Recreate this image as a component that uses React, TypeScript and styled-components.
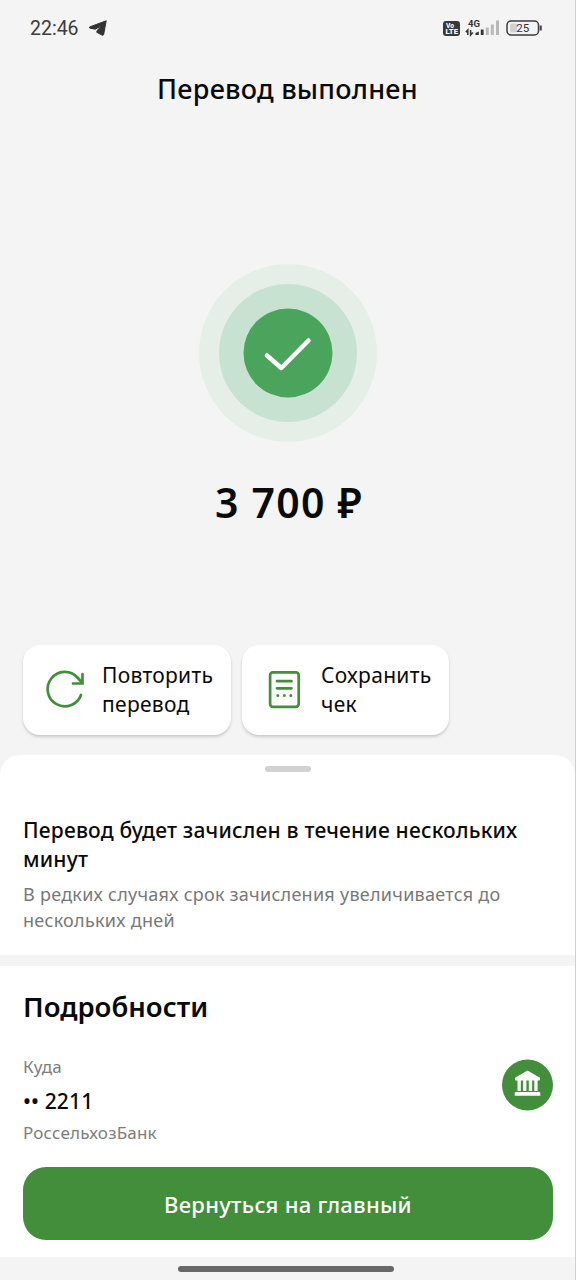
import React from "react";
import styled, { createGlobalStyle } from "styled-components";

const GlobalStyle = createGlobalStyle`
  * { box-sizing: border-box; }
  body { margin: 0; background: #f4f4f4; }
`;

const Screen = styled.div`
  width: 576px;
  height: 1280px;
  display: flex;
  flex-direction: column;
  overflow: hidden;
  background: #f4f4f4;
  border-right: 1px solid #cfcfcf;
  font-family: "Noto Sans", "Open Sans", sans-serif;
  color: #0a0a0a;
`;

const StatusBar = styled.header`
  height: 56px;
  flex: none;
  display: flex;
  align-items: center;
  justify-content: space-between;
  padding: 0 32px 0 30px;
  color: #3c3c3c;
`;

const StatusGroup = styled.div<{ $gap: number }>`
  display: flex;
  align-items: center;
  gap: ${(p) => p.$gap}px;
`;

const Clock = styled.span`
  padding-top: 2px;
  font: 400 19.5px/24px Roboto, sans-serif;
`;

const Line = styled.p<{
  $size: number;
  $height: number;
  $weight?: number;
  $spacing?: number;
  $color?: string;
  $top?: number;
}>`
  margin: ${(p) => p.$top ?? 0}px 0 0;
  font-size: ${(p) => p.$size}px;
  line-height: ${(p) => p.$height}px;
  font-weight: ${(p) => p.$weight ?? 400};
  letter-spacing: ${(p) => p.$spacing ?? 0}px;
  color: ${(p) => p.$color ?? "inherit"};
  white-space: nowrap;
`;

const Amount = styled(Line)`
  padding-left: 3px;
`;

const Hero = styled.main`
  height: 589px;
  flex: none;
  display: flex;
  flex-direction: column;
  align-items: center;
`;

const Disc = styled.svg`
  display: block;
  margin-top: 156px;
  flex: none;
`;

const Actions = styled.div`
  height: 110px;
  flex: none;
  display: flex;
  gap: 11px;
  padding: 0 23px 20px;
`;

const ActionCard = styled.button<{ $width: number }>`
  width: ${(p) => p.$width}px;
  height: 90px;
  display: flex;
  align-items: center;
  gap: 16px;
  padding: 0 0 0 21px;
  border: 0;
  border-radius: 17px;
  background: #fff;
  box-shadow: 0 2px 3px rgba(0, 0, 0, 0.17);
  color: inherit;
  font-family: inherit;
  text-align: left;
`;

const Sheet = styled.section`
  height: 200px;
  flex: none;
  padding: 11px 23px 0;
  background: #fff;
  border-radius: 20px 20px 0 0;
`;

const Handle = styled.div`
  width: 46px;
  height: 6px;
  margin: 0 auto 44px;
  border-radius: 3px;
  background: #d2d2d2;
`;

const Details = styled.section`
  height: 291px;
  flex: none;
  margin-top: 11px;
  padding: 22px 22px 0 23px;
  background: #fff;
`;

const Recipient = styled.div`
  height: 114px;
  margin-top: 27px;
  display: flex;
  justify-content: space-between;
`;

const BankBadge = styled.svg`
  display: block;
  margin-top: 6px;
`;

const HomeButton = styled.button`
  width: 100%;
  height: 73px;
  display: flex;
  align-items: center;
  justify-content: center;
  padding: 0;
  border: 0;
  border-radius: 23px;
  background: #428e3a;
  color: #fff;
  font-family: inherit;
`;

const NavBar = styled.footer`
  flex: 1;
  padding: 9px 0 0 178px;
`;

const NavPill = styled.div`
  width: 216px;
  height: 6px;
  border-radius: 3px;
  background: #686868;
`;

const Plane = () => (
  <svg width="18" height="16" viewBox="0 0 18 16">
    <path d="M17.200.8 1 6.800c-.9.4-.9 1.200 0 1.400l5.300 1L12.500 5.600 8.500 10.200l-.9 2 5.400 2.900c.9.4 1.500.2 1.700-.8Z" fill="#333" stroke="#333" strokeWidth="1" strokeLinejoin="round" />
  </svg>
);

const VoLte = () => (
  <svg width="17" height="15" viewBox="0 0 17 15">
    <rect width="17" height="15" rx="3" fill="#393939" />
    <g fill="#fff" fontFamily="Roboto, sans-serif" fontWeight="800" fontSize="7">
      <text x="3" y="7" textLength="8" lengthAdjust="spacingAndGlyphs">Vo</text>
      <text x="2.500" y="13.300" textLength="12.500" lengthAdjust="spacingAndGlyphs">LTE</text>
    </g>
  </svg>
);

const Signal = () => (
  <svg width="36" height="18" viewBox="0 0 36 18">
    <text x="3" y="8" fontFamily="Roboto, sans-serif" fontWeight="700" fontSize="9.500" fill="#333" textLength="12" lengthAdjust="spacingAndGlyphs">4G</text>
    <path d="M2.800 16v-5L.8 13.300M5.600 11v5l2.200-2.500" stroke="#333" strokeWidth="1.500" fill="none" />
    <path d="M10.500 16v-2l3.300-1.500V16Z M15.800 16v-5.500h2.800V16Z" fill="#333" />
    <path d="M20.800 16V8.500h3V16Z M25.800 16V5.500h3V16Z M31 16V1.500h3V16Z" fill="#b8b8b8" />
  </svg>
);

const Battery = () => (
  <svg width="37" height="16" viewBox="0 0 37 16">
    <rect x="1" y="1" width="31.500" height="14" rx="4" fill="none" stroke="#3c3c3c" strokeWidth="1.500" />
    <rect x="4" y="3.500" width="7" height="9" rx="1.500" fill="#d2d2d2" />
    <path d="M34.700 5.500v5" stroke="#3c3c3c" strokeWidth="2" />
    <text x="16.800" y="12.100" textAnchor="middle" fontFamily="Roboto, sans-serif" fontWeight="400" fontSize="11.500" fill="#333">25</text>
  </svg>
);

const RepeatIcon = () => (
  <svg width="42" height="42" viewBox="0 0 42 42" fill="none" stroke="#428e3a" strokeWidth="2.700" strokeLinecap="round" strokeLinejoin="miter">
    <path d="M37 26A17.200 17.200 0 1 1 33.500 8.500L37.500 13" />
    <path d="M38.500 5v9.500h-9.500" />
  </svg>
);

const ReceiptIcon = () => (
  <svg width="42" height="42" viewBox="0 0 42 42" fill="none" stroke="#428e3a" strokeWidth="2.700" strokeLinecap="round">
    <rect x="7.100" y="3.400" width="28.600" height="34.400" rx="2.800" />
    <path d="M14 12.200h14.500M14 19.300h14.500" />
    <path d="M14.800 26.400h.01M21.300 26.400h.01M27.800 26.400h.01" strokeWidth="3" />
  </svg>
);

export default function App() {
  return (
    <Screen>
      <GlobalStyle />
      <StatusBar>
        <StatusGroup $gap={10}>
          <Clock>22:46</Clock>
          <Plane />
        </StatusGroup>
        <StatusGroup $gap={5}>
          <VoLte />
          <Signal />
          <Battery />
        </StatusGroup>
      </StatusBar>

      <Hero>
        <Line $size={27} $height={38} $weight={500} $spacing={0.25} $top={14}>Перевод выполнен</Line>
        <Disc width="178" height="178" viewBox="0 0 178 178">
          <circle cx="89" cy="89" r="89" fill="#e5efe7" />
          <circle cx="89" cy="89" r="69" fill="#c8e2d1" />
          <circle cx="89" cy="89" r="44.500" fill="#4ba45b" />
          <path d="M68 91.500 82.300 104 109.500 76.500" fill="none" stroke="#fff" strokeWidth="4.500" strokeLinecap="round" strokeLinejoin="round" />
        </Disc>
        <Amount $size={41} $height={56} $weight={600} $spacing={1.2} $top={32}>3 700 ₽</Amount>
      </Hero>

      <Actions>
        <ActionCard $width={208}>
          <RepeatIcon />
          <div>
            <Line $size={21} $height={29} $spacing={0.3}>Повторить</Line>
            <Line $size={21} $height={29} $spacing={0.3}>перевод</Line>
          </div>
        </ActionCard>
        <ActionCard $width={207}>
          <ReceiptIcon />
          <div>
            <Line $size={21} $height={29} $spacing={0.3}>Сохранить</Line>
            <Line $size={21} $height={29} $spacing={0.3}>чек</Line>
          </div>
        </ActionCard>
      </Actions>

      <Sheet>
        <Handle />
        <Line $size={21} $height={29} $weight={500} $spacing={0.2}>Перевод будет зачислен в течение нескольких</Line>
        <Line $size={21} $height={29} $weight={500} $spacing={0.2}>минут</Line>
        <Line $size={18} $height={25.5} $spacing={0.27} $color="#787878" $top={8}>В редких случаях срок зачисления увеличивается до</Line>
        <Line $size={18} $height={25.5} $spacing={0.27} $color="#787878">нескольких дней</Line>
      </Sheet>

      <Details>
        <Line $size={27.5} $height={38} $weight={600}>Подробности</Line>
        <Recipient>
          <div>
            <Line $size={17} $height={24} $spacing={0.2} $color="#7d7d7d" $top={2}>Куда</Line>
            <Line $size={21} $height={30} $weight={500} $spacing={0.15} $top={7}>•• 2211</Line>
            <Line $size={17} $height={24} $spacing={0.2} $color="#7d7d7d" $top={5}>РоссельхозБанк</Line>
          </div>
          <BankBadge width="51" height="52" viewBox="0 0 51 52">
            <circle cx="25.500" cy="26" r="25.500" fill="#428e3a" />
            <path d="M13 20.500v-1.700L25.500 11.500 38 18.800v1.700q0 1-1 1H14q-1 0-1-1ZM15.500 21h3.300v11h-3.300ZM21.100 21h3.300v11h-3.300ZM26.800 21h3.300v11h-3.300ZM32.300 21h3.300v11h-3.300ZM14 33h23q1.300 0 1.300 1.300v2.500H12.700v-2.500Q12.700 33 14 33Z" fill="#fff" />
          </BankBadge>
        </Recipient>
        <HomeButton>
          <Line as="span" $size={22} $height={30} $weight={500} $spacing={0.27}>Вернуться на главный</Line>
        </HomeButton>
      </Details>

      <NavBar>
        <NavPill />
      </NavBar>
    </Screen>
  );
}
